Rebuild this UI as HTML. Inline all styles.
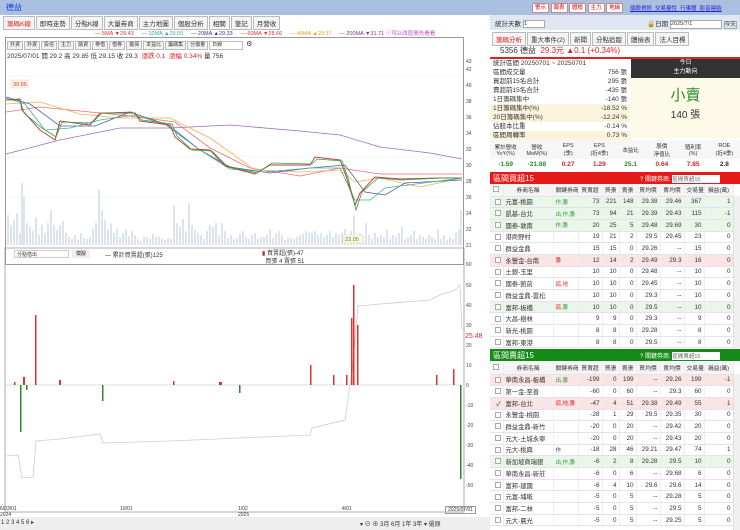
<!DOCTYPE html>
<html><head><meta charset="utf-8"><style>
*{box-sizing:border-box;margin:0;padding:0}
body{width:740px;height:530px;overflow:hidden;background:#fff;font-family:"Liberation Sans","Noto Sans CJK TC",sans-serif;font-size:7px;color:#333;position:relative}
.abs{position:absolute}
.tb{position:absolute;left:0;top:0;width:740px;height:15px;background:#a9c0e0}
.btn{display:inline-block;border:1px solid #c88;background:#fff;color:#c00;font-size:5.5px;padding:0 2px;margin-right:1.5px;line-height:8px}
.tab{display:inline-block;border:1px solid #bbb;background:#f4f4f4;padding:1px 3px;margin-right:1px;font-size:6.5px}
.tab2{display:inline-block;border:1px solid #bbb;background:#f4f4f4;padding:0 2px;margin-right:1px;font-size:5px;line-height:7px}
table{border-collapse:collapse;table-layout:fixed}
.bt td{height:11.7px;border-bottom:1px solid #e4e4e4;border-right:1px solid #eee;font-size:6.3px;padding:0 2px;text-align:right;white-space:nowrap;overflow:hidden}
.bt td:nth-child(2){text-align:left}
.bt td:nth-child(3){text-align:left;font-size:5.5px}
.bt tr.h td{text-align:center;background:#f4f4f4;height:12px;font-size:5.8px}
.g{background:#eaf6ea}.p{background:#fbe4e6}
.cb{display:inline-block;width:6px;height:6px;border:1px solid #aaa;background:#fff;vertical-align:middle}
.st div{height:9px;line-height:9px;font-size:6.5px;padding:0 3px;display:flex;justify-content:space-between}
</style></head><body>
<div class="tb"><span class="abs" style="left:6px;top:2px;color:#1a3fd0;font-size:8px">德益</span>
<div class="abs" style="left:532px;top:3px;white-space:nowrap"><span class="btn">警示</span><span class="btn">報表</span><span class="btn">體檢</span><span class="btn">主力</span><span class="btn">地緣</span></div>
<div class="abs" style="left:630px;top:4px;color:#22c;font-size:5.5px;text-decoration:underline;white-space:nowrap">個股資訊 &nbsp;交易量性 &nbsp;行事曆 &nbsp;影音連結</div></div>
<div class="abs" style="left:3px;top:16px;white-space:nowrap"><span class="tab" style="color:#d22">籌碼K線</span><span class="tab">即時走勢</span><span class="tab">分點K線</span><span class="tab">大量券商</span><span class="tab">主力地圖</span><span class="tab">個股分析</span><span class="tab">相關</span><span class="tab">筆記</span><span class="tab">月營收</span></div>
<div class="abs" style="left:95px;top:29px;font-size:5.5px;white-space:nowrap"><span style="color:#d33">— 5MA ▼29.43</span> &nbsp;&nbsp;&nbsp; <span style="color:#3aa">— 10MA ▲29.50</span> &nbsp;&nbsp;&nbsp; <span style="color:#33a">— 20MA ▲29.33</span> &nbsp;&nbsp;&nbsp; <span style="color:#d33">— 60MA ▼28.66</span> &nbsp;&nbsp;&nbsp; <span style="color:#e9a020">— 40MA ▲29.37</span> &nbsp;&nbsp;&nbsp; <span style="color:#838">— 200MA ▼31.71</span> <span style="color:#c4c">ⓘ可以改區間先看看</span></div>
<div class="abs" style="left:5px;top:37px;width:459px;height:228px;border:1px solid #999"></div>
<div class="abs" style="left:7px;top:40px;white-space:nowrap"><span class="tab2">外資</span><span class="tab2">外資</span><span class="tab2">投信</span><span class="tab2">主力</span><span class="tab2">融資</span><span class="tab2">券借</span><span class="tab2">借券</span><span class="tab2">擔保</span><span class="tab2">本益比</span><span class="tab2">籌碼集</span><span class="tab2">分價量</span><span class="tab2" style="width:34px;background:#fff">日線</span> ⚙</div>
<div class="abs" style="left:7px;top:50px;font-size:6.5px;white-space:nowrap">2025/07/01 開 29.2 高 29.85 低 29.15 收 29.3 &nbsp;<span style="color:#d22">漲跌 0.1 &nbsp;漲幅 0.34%</span> 量 756</div>
<svg class="abs" style="left:0;top:0" width="490" height="530">
<g stroke="#eee" stroke-width="0.5"><line x1="6" y1="76" x2="463" y2="76"/><line x1="6" y1="157" x2="463" y2="157"/><line x1="6" y1="197" x2="463" y2="197"/></g>
<path stroke="#c4d2e4" stroke-width="1.2" fill="none" d="M8 245v-30M11 245v-20M14 245v-25M17 245v-32M20 245v-12M22 245v-62M24 245v-48M27 245v-22M30 245v-18M33 245v-14M36 245v-28M39 245v-10M42 245v-20M45 245v-12M48 245v-22M51 245v-35M54 245v-20M57 245v-15M60 245v-20M63 245v-24M66 245v-12M69 245v-8M72 245v-6M75 245v-10M78 245v-5M81 245v-12M84 245v-7M87 245v-6M90 245v-8M93 245v-16M96 245v-22M99 245v-55M102 245v-34M105 245v-25M108 245v-16M111 245v-22M114 245v-12M117 245v-16M120 245v-8M123 245v-12M126 245v-16M129 245v-9M132 245v-14M135 245v-10M138 245v-6M141 245v-4M144 245v-8M147 245v-8M150 245v-6M153 245v-11M156 245v-8M159 245v-8M162 245v-7M165 245v-5M168 245v-7M171 245v-6M174 245v-40M177 245v-22M180 245v-18M183 245v-26M186 245v-14M189 245v-42M192 245v-20M195 245v-15M198 245v-12M201 245v-10M204 245v-6M207 245v-14M210 245v-20M213 245v-18M216 245v-22M219 245v-10M222 245v-22M225 245v-14M228 245v-7M231 245v-10M234 245v-6M237 245v-7M240 245v-11M243 245v-14M246 245v-8M249 245v-6M252 245v-10M255 245v-12M258 245v-6M261 245v-8M264 245v-8M267 245v-10M270 245v-16M273 245v-7M276 245v-12M279 245v-14M282 245v-10M285 245v-5M288 245v-7M291 245v-7M294 245v-6M297 245v-8M300 245v-10M303 245v-11M306 245v-14M309 245v-12M312 245v-12M315 245v-14M318 245v-10M321 245v-12M324 245v-8M327 245v-10M330 245v-14M333 245v-8M336 245v-12M339 245v-10M342 245v-12M345 245v-16M348 245v-8M351 245v-14M354 245v-30M357 245v-10M360 245v-12M363 245v-8M366 245v-22M369 245v-10M372 245v-6M375 245v-12M378 245v-8M381 245v-10M384 245v-8M387 245v-15M390 245v-6M393 245v-10M396 245v-8M399 245v-12M402 245v-18M405 245v-6M408 245v-8M411 245v-10M414 245v-14M417 245v-6M420 245v-10M423 245v-8M426 245v-6M429 245v-10M432 245v-8M435 245v-6M438 245v-16M441 245v-6M444 245v-10M447 245v-5M450 245v-8M453 245v-6M456 245v-12M459 245v-16M461 245v-35"/>
<polyline fill="none" stroke="#a06ac0" stroke-width="0.8" points="6,154 60,140 120,128 170,128 230,125 300,131 340,135 380,147 430,153 462,159"/>
<polyline fill="none" stroke="#e87070" stroke-width="0.8" points="6,112 40,107 90,112 130,116 175,122 210,148 250,168 300,176 340,168 380,174 462,174"/>
<polyline fill="none" stroke="#f0b050" stroke-width="0.8" points="6,104 40,102 80,114 120,118 170,118 210,138 255,170 300,172 340,170 355,182 380,178 420,187 462,178"/>
<polyline fill="none" stroke="#5060b0" stroke-width="0.8" points="6,97 30,104 60,126 95,126 130,112 165,124 200,150 230,167 270,173 310,168 345,165 365,192 385,195 405,183 462,180"/>
<polyline fill="none" stroke="#40b0a0" stroke-width="0.8" points="6,98 25,104 45,130 70,128 100,120 135,115 170,126 200,150 230,169 265,172 310,168 340,168 355,200 370,200 385,188 462,178"/>
<polyline fill="none" stroke="#c04040" stroke-width="1" points="6,100 20,99 22,110 40,130 55,140 60,121 90,125 100,113 135,113 140,121 170,125 175,137 190,149 210,150 225,166 255,174 270,165 310,165 315,157 340,160 345,173 355,205 360,193 375,177 400,179 440,178 462,178"/>
<polyline fill="none" stroke="#30a040" stroke-width="0.8" points="8,100 20,100 24,113 42,128 56,137 62,122 92,123 102,113 132,112 142,120 172,124 177,136 192,150 212,151 227,166 257,173 272,163 312,164 317,159 342,161 348,178 356,210 362,192 378,178 402,180 442,178 462,178"/>
<rect x="11" y="80" width="17" height="8" fill="#fff6e6" stroke="#f0d8b0" stroke-width=".5"/><text x="13" y="86" font-size="5.5" fill="#d33">39.95</text>
<rect x="343" y="235" width="20" height="8" fill="#fff6e6" stroke="#f0d8b0" stroke-width=".5"/><text x="345" y="241" font-size="5.5" fill="#393">23.05</text>
<g font-size="5" fill="#444"><text x="466" y="63">43</text><text x="466" y="71">42</text><text x="466" y="87">40</text><text x="466" y="103">38</text><text x="466" y="119">36</text><text x="466" y="135">34</text><text x="466" y="151">32</text><text x="466" y="167">30</text><text x="466" y="183">28</text><text x="466" y="199">26</text><text x="466" y="215">24</text><text x="466" y="231">22</text><text x="466" y="247">21</text>
<text x="466" y="266">60</text><text x="466" y="287">50</text><text x="466" y="307">40</text><text x="466" y="327">30</text><text x="466" y="347">20</text><text x="466" y="367">10</text><text x="466" y="387">0</text><text x="466" y="407">-10</text><text x="466" y="427">-20</text><text x="466" y="447">-30</text><text x="466" y="467">-40</text><text x="466" y="487">-50</text></g>
<text x="465" y="338" font-size="7" fill="#c33">25.48</text>
<rect x="5" y="248" width="459" height="264" fill="none" stroke="#999" stroke-width="0.8"/>
<line x1="6" y1="385" x2="462" y2="385" stroke="#bbb" stroke-width=".6"/>
<polyline fill="none" stroke="#ccc" stroke-width="0.8" points="6,456 18,455 22,478 33,477 36,441 60,439 100,434 103,443 170,441 240,438 310,435 312,428 345,420 350,385 352,375 358,305 360,306 380,304 430,300 440,295 455,290 460,285 462,330"/>
<g fill="#e03030"><rect x="35" y="315" width="1.5" height="70"/><rect x="353" y="285" width="1.5" height="100"/><rect x="351" y="318" width="1.5" height="67"/><rect x="357" y="325" width="1.5" height="60"/><rect x="310" y="365" width="1.5" height="20"/><rect x="333" y="375" width="1.5" height="10"/><rect x="346" y="375" width="1.5" height="10"/><rect x="436" y="375" width="1.5" height="10"/><rect x="453" y="369" width="1.5" height="16"/><rect x="23" y="377" width="2" height="8"/><rect x="59" y="380" width="2" height="5"/><rect x="14" y="382" width="1.5" height="3"/><rect x="173" y="381" width="1.5" height="4"/><rect x="219" y="382" width="3" height="3"/></g>
<g fill="#2a8a2a"><rect x="20" y="385" width="1.5" height="47"/><rect x="102" y="385" width="1.5" height="16"/><rect x="239" y="385" width="1.5" height="8"/><rect x="460" y="385" width="1.5" height="94"/><rect x="26" y="385" width="1.5" height="5"/></g>
</svg>
<div class="abs" style="left:14px;top:250px;width:55px;height:8px;border:1px solid #ccc;font-size:5px;padding-left:2px">分點借出</div>
<div class="abs" style="left:72px;top:250px;width:18px;height:8px;background:#eee;font-size:5px;text-align:center">模擬</div>
<div class="abs" style="left:105px;top:250px;font-size:6px">— 累計買賣超(張)125</div>
<div class="abs" style="left:262px;top:250px;font-size:6px;line-height:8px"><span style="color:#c22">▮</span> 買賣超(張)-47<br>&nbsp;&nbsp;買張 4 賣張 51</div>
<div class="abs" style="left:0;top:506px;font-size:5px;width:490px;line-height:6px"><span class="abs" style="left:0">6/03/01<br>2024</span><span class="abs" style="left:120px">10/01</span><span class="abs" style="left:238px">1/02<br>2025</span><span class="abs" style="left:342px">4/01</span><span class="abs" style="left:445px;border:1px solid #999;padding:0 2px">2025/07/01</span></div>
<div class="abs" style="left:0;top:517px;width:490px;height:13px;background:#eee;font-size:6px;padding:2px 1px">1 2 3 4 5 6 ▸<span class="abs" style="left:360px;top:2px">▾ ⊖ ⊕ 3月 6月 1年 3年 ▾ 還原</span></div>
<!-- right panel -->
<div class="abs" style="left:490px;top:15px;width:250px;height:15px;background:#dfe7f3"></div>
<div class="abs" style="left:495px;top:18px;font-size:6.5px">統計天數 <span style="display:inline-block;width:22px;height:8px;border:1px solid #aaa;background:#fff;vertical-align:middle;font-size:5.5px">1</span></div>
<div class="abs" style="left:647px;top:18px;font-size:6.5px;white-space:nowrap">🔒日期 <span style="display:inline-block;width:52px;height:9px;border:1px solid #aaa;background:#fff;font-size:5.5px;vertical-align:middle">2025/7/1</span> <span style="border:1px solid #aaa;font-size:5.5px">今天</span></div>
<div class="abs" style="left:492px;top:32px;white-space:nowrap"><span class="tab" style="color:#d22">籌碼分析</span><span class="tab">重大事件(2)</span><span class="tab">新聞</span><span class="tab">分點追蹤</span><span class="tab">體檢表</span><span class="tab">法人目標</span></div>
<div class="abs" style="left:500px;top:45px;font-size:8px;white-space:nowrap">5356 德益 &nbsp;<span style="color:#d22">29.3元 ▲0.1 (+0.34%)</span></div>
<div class="abs" style="left:490px;top:57px;width:250px;height:1.5px;background:#d22"></div>
<div class="abs st" style="left:490px;top:59px;width:140px">
<div><span>統計區間 20250701 ~ 20250701</span></div><div><span>區間成交量</span><span>756 張</span></div><div><span>買超前15名合計</span><span>295 張</span></div><div><span>賣超前15名合計</span><span>-435 張</span></div><div><span>1日籌碼集中</span><span>-140 張</span></div><div style="background:#fbf3dc"><span>1日籌碼集中(%)</span><span>-18.52 %</span></div><div style="background:#fbf3dc"><span>20日籌碼集中(%)</span><span>-12.24 %</span></div><div><span>佔股本比重</span><span>-0.14 %</span></div><div style="background:#fbf3dc"><span>區間周轉率</span><span>0.73 %</span></div></div>
<div class="abs" style="left:631px;top:59px;width:109px;height:19px;background:#333;color:#fff;font-size:6px;text-align:center;line-height:9px">今日<br>主力動向</div>
<div class="abs" style="left:631px;top:78px;width:109px;height:60px;background:#fdfbe8;text-align:center"><div style="color:#2a8a2a;font-size:15px;margin-top:6px">小賣</div><div style="font-size:10px;margin-top:1px">140 張</div></div>
<table class="abs" style="left:490px;top:140px;width:250px;font-size:5.5px;text-align:center"><tr style="height:19px;background:#f6f6f6">
<td>累計營收<br>YoY(%)</td><td>營收<br>MoM(%)</td><td>EPS<br>(季)</td><td>EPS<br>(近4季)</td><td>本益比</td><td>股價<br>淨值比</td><td>殖利率<br>(%)</td><td>ROE<br>(近4季)</td></tr>
<tr style="height:10px;font-size:6.5px;font-weight:bold"><td style="color:#2a8a2a">-1.59</td><td style="color:#2a8a2a">-21.88</td><td style="color:#d22">0.27</td><td style="color:#d22">1.29</td><td style="color:#2a8a2a">25.1</td><td style="color:#d22">0.64</td><td style="color:#d22">7.85</td><td>2.8</td></tr></table>
<div class="abs" style="left:490px;top:172px;width:250px;height:12px;background:#e61818;color:#fff;font-size:8px;padding:1px 3px">區間買超15<span class="abs" style="left:150px;top:2px;font-size:6px;white-space:nowrap">? 關鍵券商: <span style="display:inline-block;width:48px;height:8px;background:#fff;color:#666;font-size:5.5px;vertical-align:middle">區間買超15</span></span></div>
<table class="abs bt" style="left:490px;top:184px;width:243px">
<colgroup><col style="width:13px"><col style="width:50px"><col style="width:25px"><col style="width:24px"><col style="width:17px"><col style="width:17px"><col style="width:24px"><col style="width:24px"><col style="width:20px"><col style="width:29px"></colgroup>
<tr class="h"><td><span class="cb"></span></td><td style="text-align:center">券商名稱</td><td>關鍵券商</td><td>買賣超</td><td>買張</td><td>賣張</td><td>買均價</td><td>賣均價</td><td>交易量</td><td>損益(萬)</td></tr>
<tr class="g"><td><span class="cb"></span></td><td>元富-桃園</td><td style="color:#393">作,籌</td><td>73</td><td>221</td><td>148</td><td>29.38</td><td>29.46</td><td>367</td><td>1</td></tr>
<tr class="g"><td><span class="cb"></span></td><td>凱基-台北</td><td style="color:#393">出,作,籌</td><td>73</td><td>94</td><td>21</td><td>29.39</td><td>29.43</td><td>115</td><td>-1</td></tr>
<tr class="g"><td><span class="cb"></span></td><td>國泰-敦南</td><td style="color:#393">作,籌</td><td>20</td><td>25</td><td>5</td><td>29.48</td><td>29.69</td><td>30</td><td>0</td></tr>
<tr><td><span class="cb"></span></td><td>港商野村</td><td></td><td>19</td><td>21</td><td>2</td><td>29.5</td><td>29.45</td><td>23</td><td>0</td></tr>
<tr><td><span class="cb"></span></td><td>群益金鼎</td><td></td><td>15</td><td>15</td><td>0</td><td>29.26</td><td>--</td><td>15</td><td>0</td></tr>
<tr class="p"><td><span class="cb"></span></td><td>永豐金-台南</td><td style="color:#d22">籌</td><td>12</td><td>14</td><td>2</td><td>29.49</td><td>29.3</td><td>16</td><td>0</td></tr>
<tr><td><span class="cb"></span></td><td>土銀-玉里</td><td></td><td>10</td><td>10</td><td>0</td><td>29.48</td><td>--</td><td>10</td><td>0</td></tr>
<tr><td><span class="cb"></span></td><td>國泰-館前</td><td style="color:#d22">孤,地</td><td>10</td><td>10</td><td>0</td><td>29.45</td><td>--</td><td>10</td><td>0</td></tr>
<tr><td><span class="cb"></span></td><td>群益金鼎-雲松</td><td></td><td>10</td><td>10</td><td>0</td><td>29.3</td><td>--</td><td>10</td><td>0</td></tr>
<tr class="g"><td><span class="cb"></span></td><td>富邦-板橋</td><td style="color:#d22">孤,<span style="color:#393">籌</span></td><td>10</td><td>10</td><td>0</td><td>29.5</td><td>--</td><td>10</td><td>0</td></tr>
<tr><td><span class="cb"></span></td><td>大昌-樹林</td><td></td><td>9</td><td>9</td><td>0</td><td>29.3</td><td>--</td><td>9</td><td>0</td></tr>
<tr><td><span class="cb"></span></td><td>新光-桃園</td><td></td><td>8</td><td>8</td><td>0</td><td>29.28</td><td>--</td><td>8</td><td>0</td></tr>
<tr><td><span class="cb"></span></td><td>富邦-東港</td><td></td><td>8</td><td>8</td><td>0</td><td>29.5</td><td>--</td><td>8</td><td>0</td></tr>
</table>
<div class="abs" style="left:733px;top:196px;width:7px;height:152px;background:#f0f0f0;border-left:1px solid #ddd"></div>
<div class="abs" style="left:490px;top:349px;width:250px;height:12px;background:#168a16;color:#fff;font-size:8px;padding:1px 3px">區間賣超15<span class="abs" style="left:150px;top:2px;font-size:6px;white-space:nowrap">? 關鍵券商: <span style="display:inline-block;width:48px;height:8px;background:#fff;color:#666;font-size:5.5px;vertical-align:middle">區間賣超15</span></span></div>
<table class="abs bt" style="left:490px;top:362px;width:243px">
<colgroup><col style="width:13px"><col style="width:50px"><col style="width:25px"><col style="width:24px"><col style="width:17px"><col style="width:17px"><col style="width:24px"><col style="width:24px"><col style="width:20px"><col style="width:29px"></colgroup>
<tr class="h"><td><span class="cb"></span></td><td style="text-align:center">券商名稱</td><td>關鍵券商</td><td>買賣超</td><td>買張</td><td>賣張</td><td>買均價</td><td>賣均價</td><td>交易量</td><td>損益(萬)</td></tr>
<tr class="p"><td><span class="cb"></span></td><td>華南永昌-板橋</td><td style="color:#393">出,籌</td><td>-199</td><td>0</td><td>199</td><td>--</td><td>29.26</td><td>199</td><td>-1</td></tr>
<tr><td><span class="cb"></span></td><td>第一金-至善</td><td></td><td>-60</td><td>0</td><td>60</td><td>--</td><td>29.3</td><td>60</td><td>0</td></tr>
<tr class="p"><td>✓</td><td>富邦-台北</td><td style="color:#d22">孤,地,籌</td><td>-47</td><td>4</td><td>51</td><td>29.38</td><td>29.49</td><td>55</td><td>1</td></tr>
<tr><td><span class="cb"></span></td><td>永豐金-桃園</td><td></td><td>-28</td><td>1</td><td>29</td><td>29.5</td><td>29.35</td><td>30</td><td>0</td></tr>
<tr><td><span class="cb"></span></td><td>群益金鼎-新竹</td><td></td><td>-20</td><td>0</td><td>20</td><td>--</td><td>29.42</td><td>20</td><td>0</td></tr>
<tr><td><span class="cb"></span></td><td>元大-土城永寧</td><td></td><td>-20</td><td>0</td><td>20</td><td>--</td><td>29.43</td><td>20</td><td>0</td></tr>
<tr><td><span class="cb"></span></td><td>元大-桃興</td><td>作</td><td>-18</td><td>28</td><td>46</td><td>29.21</td><td>29.47</td><td>74</td><td>1</td></tr>
<tr class="g"><td><span class="cb"></span></td><td>新加坡商瑞銀</td><td style="color:#393">出,作,籌</td><td>-6</td><td>2</td><td>8</td><td>29.28</td><td>29.5</td><td>10</td><td>0</td></tr>
<tr><td><span class="cb"></span></td><td>華南永昌-新莊</td><td></td><td>-6</td><td>0</td><td>6</td><td>--</td><td>29.68</td><td>6</td><td>0</td></tr>
<tr><td><span class="cb"></span></td><td>富邦-建國</td><td></td><td>-6</td><td>4</td><td>10</td><td>29.6</td><td>29.6</td><td>14</td><td>0</td></tr>
<tr><td><span class="cb"></span></td><td>元富-埔墘</td><td></td><td>-5</td><td>0</td><td>5</td><td>--</td><td>29.28</td><td>5</td><td>0</td></tr>
<tr><td><span class="cb"></span></td><td>富邦-二林</td><td></td><td>-5</td><td>0</td><td>5</td><td>--</td><td>29.5</td><td>5</td><td>0</td></tr>
<tr><td><span class="cb"></span></td><td>元大-晨光</td><td></td><td>-5</td><td>0</td><td>5</td><td>--</td><td>29.25</td><td>5</td><td>0</td></tr>
</table>
<div class="abs" style="left:733px;top:374px;width:7px;height:156px;background:#f0f0f0;border-left:1px solid #ddd"></div>
</body></html>
